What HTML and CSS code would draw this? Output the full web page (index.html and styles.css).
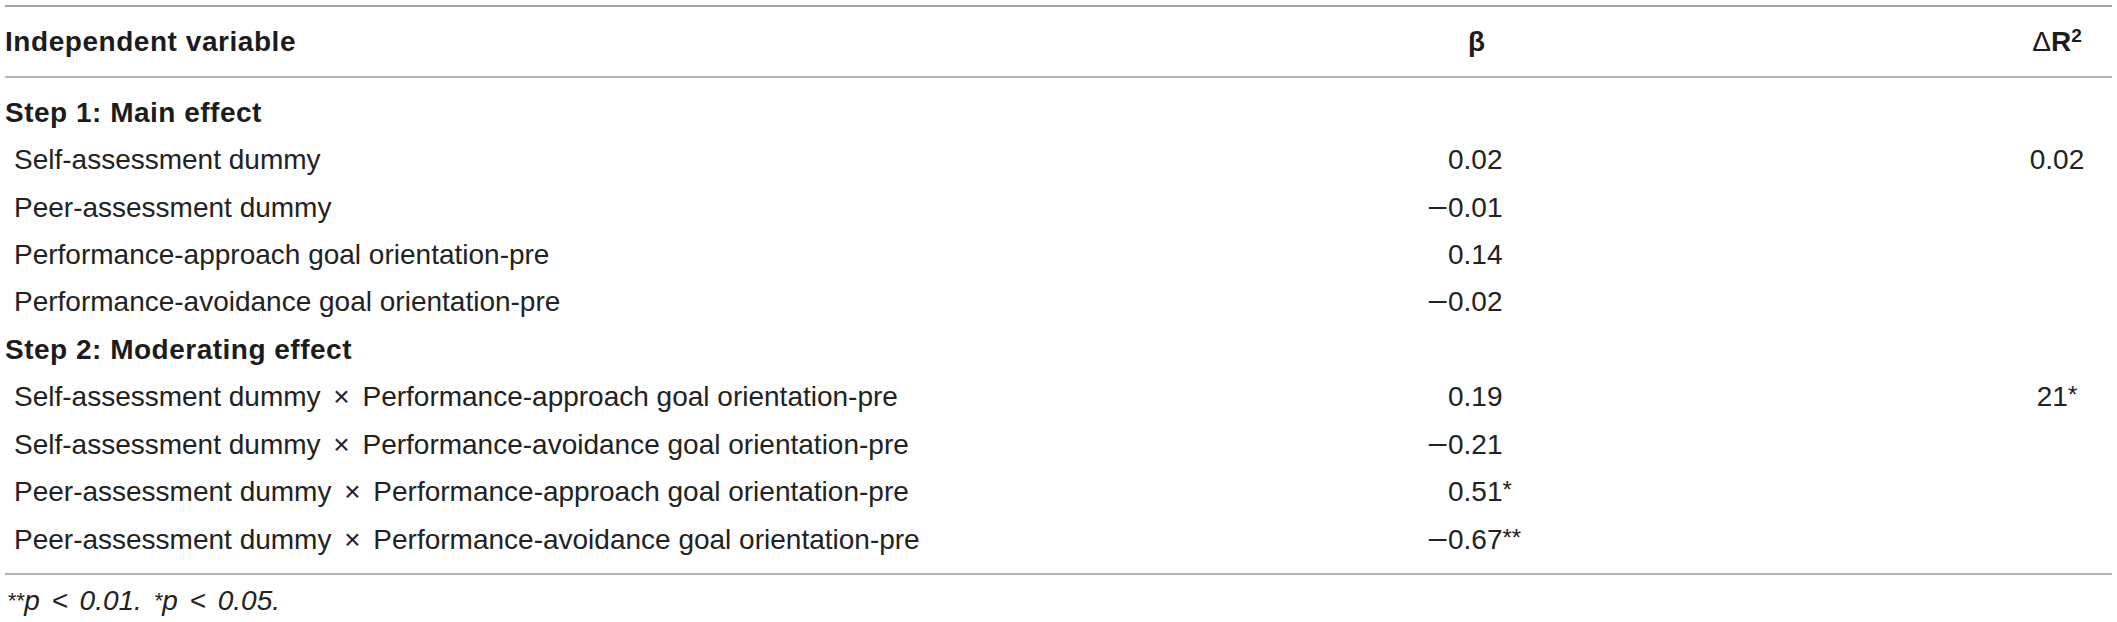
FILE: index.html
```html
<!DOCTYPE html>
<html lang="en">
<head>
<meta charset="utf-8">
<title>Moderating effect table</title>
<link rel="stylesheet" href="styles.css">
</head>
<body>
<div class="wrap">
  <table class="tbl">
    <colgroup>
      <col class="c-var">
      <col class="c-beta">
      <col class="c-dr">
    </colgroup>
    <thead>
      <tr>
        <th class="h-var">Independent variable</th>
        <th class="h-beta">β</th>
        <th class="h-dr"><span class="delta">Δ</span>R<sup class="sup2">2</sup></th>
      </tr>
    </thead>
    <tbody>
      <tr class="first">
        <td class="step">Step 1: Main effect</td>
        <td class="num"></td>
        <td class="dr"></td>
      </tr>
      <tr>
        <td class="var">Self-assessment dummy</td>
        <td class="num"><span class="sign"></span>0.02</td>
        <td class="dr">0.02</td>
      </tr>
      <tr>
        <td class="var">Peer-assessment dummy</td>
        <td class="num"><span class="sign"><span class="minus">−</span></span>0.01</td>
        <td class="dr"></td>
      </tr>
      <tr>
        <td class="var">Performance-approach goal orientation-pre</td>
        <td class="num"><span class="sign"></span>0.14</td>
        <td class="dr"></td>
      </tr>
      <tr>
        <td class="var">Performance-avoidance goal orientation-pre</td>
        <td class="num"><span class="sign"><span class="minus">−</span></span>0.02</td>
        <td class="dr"></td>
      </tr>
      <tr>
        <td class="step">Step 2: Moderating effect</td>
        <td class="num"></td>
        <td class="dr"></td>
      </tr>
      <tr>
        <td class="var">Self-assessment dummy<span class="x"> × </span>Performance-approach goal orientation-pre</td>
        <td class="num"><span class="sign"></span>0.19</td>
        <td class="dr">21<span class="ast">*</span></td>
      </tr>
      <tr>
        <td class="var">Self-assessment dummy<span class="x"> × </span>Performance-avoidance goal orientation-pre</td>
        <td class="num"><span class="sign"><span class="minus">−</span></span>0.21</td>
        <td class="dr"></td>
      </tr>
      <tr>
        <td class="var">Peer-assessment dummy<span class="x"> × </span>Performance-approach goal orientation-pre</td>
        <td class="num"><span class="sign"></span>0.51<span class="ast">*</span></td>
        <td class="dr"></td>
      </tr>
      <tr class="last">
        <td class="var">Peer-assessment dummy<span class="x"> × </span>Performance-avoidance goal orientation-pre</td>
        <td class="num"><span class="sign"><span class="minus">−</span></span>0.67<span class="ast">**</span></td>
        <td class="dr"></td>
      </tr>
    </tbody>
  </table>
  <p class="note"><span class="nast">**</span>p &lt; 0.01. <span class="nast">*</span>p &lt; 0.05.</p>
</div>
</body>
</html>
```

FILE: styles.css
```css
html, body {
  margin: 0;
  padding: 0;
  background: #ffffff;
}

body {
  font-family: "Liberation Sans", Arial, sans-serif;
  font-size: 28px;
  color: #222222;
}

.wrap {
  padding: 5px 5px 0 5px;
}

.tbl {
  width: 2107px;
  table-layout: fixed;
  border-collapse: separate;
  border-spacing: 0;
  line-height: 33.44px;
}

.c-var { width: 1422px; }
.c-beta { width: 575px; }
.c-dr { width: 110px; }

.tbl th {
  font-weight: bold;
  color: #1c1c1c;
  padding: 17.6px 0 18px 0;
  border-top: 2px solid #a4a4a4;
  border-bottom: 2px solid #b4b4b4;
  white-space: nowrap;
}

.h-var {
  text-align: left;
  letter-spacing: 0.55px;
}

.h-beta {
  text-align: left;
  padding-left: 41px !important;
}

.h-dr {
  text-align: center;
}

.delta {
  font-weight: normal;
}

.sup2 {
  font-size: 19px;
  line-height: 0;
  vertical-align: 9px;
}

.tbl td {
  padding: 7px 0;
  white-space: nowrap;
  vertical-align: top;
}

.tbl tr.first td {
  padding-top: 17.6px;
}

.tbl tr.last td {
  padding-bottom: 17px;
  border-bottom: 2px solid #b4b4b4;
}

.step {
  font-weight: bold;
  color: #1c1c1c;
  letter-spacing: 0.5px;
}

.var {
  padding-left: 9px !important;
}

.x {
  padding: 0 5px;
}

.num {
  text-align: left;
}

.sign {
  display: inline-block;
  width: 21px;
}

.minus {
  display: inline-block;
  transform: scaleX(1.3);
  transform-origin: 0 50%;
}

.dr {
  text-align: center;
}

.ast {
  font-size: 24px;
  line-height: 0;
  vertical-align: 3px;
}

.note {
  margin: 9px 0 0 2px;
  font-style: italic;
  line-height: 33.44px;
  word-spacing: 4px;
}

.nast {
  font-size: 22px;
  line-height: 0;
  vertical-align: 2px;
}
```
